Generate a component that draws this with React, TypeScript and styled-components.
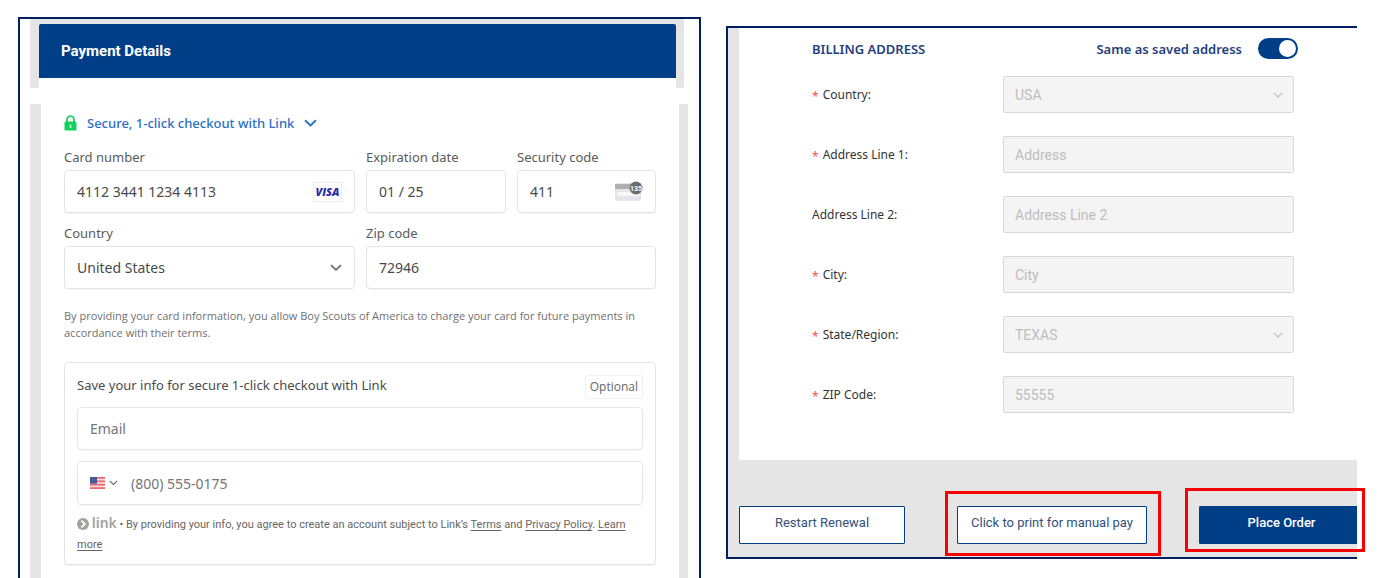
import React from "react";
import styled, { createGlobalStyle, css } from "styled-components";

const NAVY = "#001f60";
const BLUE = "#003f87";
const GRAY = "#e5e5e5";
const HUMANIST = `"Noto Sans", "Open Sans", sans-serif`;
const SMALL_PRINT = `"Open Sans", "Noto Sans", sans-serif`;
const ROBOTO = `Roboto, "Liberation Sans", sans-serif`;

const GlobalStyle = createGlobalStyle`
  *, *::before, *::after { box-sizing: border-box; }
  body { margin: 0; background: #fff; color: #4a4a4a; font-family: ${HUMANIST}; }
  input, select, button { font: inherit; color: inherit; margin: 0; }
`;

const Page = styled.main`
  display: grid;
  grid-template-columns: 683fr 631fr;
  column-gap: 25px;
  min-height: 100vh;
  padding: 17px 22px 0 18px;
`;

/* ---------- payment panel ---------- */

const PaymentPanel = styled.section`
  display: flex;
  flex-direction: column;
  border: 2px solid ${NAVY};
  border-bottom: 0;
  padding: 0 11px 0 10px;
`;

const HeaderFrame = styled.div`
  margin-right: 4px;
  padding: 5px 8px 0 9px;
  background: ${GRAY};
`;

const PanelHeader = styled.h2`
  margin: 0;
  padding: 0 22px;
  border-radius: 2px 2px 0 0;
  background: ${BLUE};
  color: #fff;
  font: 700 15px/54px ${ROBOTO};
`;

const HeaderTail = styled.div`
  height: 10px;
  background: #fff;
`;

const PaymentBody = styled.form`
  flex: 1;
  margin-top: 16px;
  padding: 8px 23px 12px;
  border-left: 11px solid ${GRAY};
  border-right: 9px solid ${GRAY};
`;

const LinkToggle = styled.button`
  display: flex;
  align-items: center;
  height: 22px;
  padding: 0;
  border: 0;
  background: none;
  color: #2b70c4;
  font-size: 13px;
  font-weight: 500;

  span { margin: 0 10px 0 10px; }
`;

const CardGrid = styled.div`
  display: grid;
  grid-template-columns: 291fr 140fr 139fr;
  column-gap: 11px;
  row-gap: 10px;
  margin-top: 13px;
`;

const Field = styled.div<{ $span?: number }>`
  grid-column: span ${(p) => p.$span ?? 1};
  min-width: 0;

  label {
    display: block;
    margin-bottom: 3px;
    font-size: 13px;
    line-height: 20px;
    color: #5a5a5a;
  }
`;

const boxed = css`
  border: 1px solid #e4e4e4;
  border-radius: 4px;
  background: #fff;
  box-shadow: 0 1px 1px rgba(0, 0, 0, 0.04);
`;

const Control = styled.div<{ $tall?: boolean }>`
  ${boxed}
  display: flex;
  align-items: center;
  height: ${(p) => (p.$tall ? 44 : 43)}px;
  padding: 0 12px;
  font-size: 14px;

  input {
    flex: 1;
    min-width: 0;
    padding: 0;
    border: 0;
    outline: 0;
    background: none;
    color: #4a4a4a;
  }
  input::placeholder { color: #757575; opacity: 1; }
  select {
    flex: 1;
    min-width: 0;
    padding: 0;
    border: 0;
    appearance: none;
    background: none;
  }
`;

const VisaMark = styled.span`
  display: grid;
  place-items: center;
  width: 29px;
  height: 20px;
  border: 1px solid #ececf2;
  color: #2b2fa8;
  font: italic 800 11px/18px "Open Sans", sans-serif;
`;

const Legal = styled.p`
  margin: 18px 0 0;
  font: 11px/17px ${SMALL_PRINT};
  color: #707070;
`;

const SaveBox = styled.section`
  ${boxed}
  margin-top: 21px;
  padding: 12px 12px 9px;
`;

const SaveHeading = styled.div`
  display: flex;
  justify-content: space-between;
  height: 32px;
  font-size: 13px;
  line-height: 20px;
`;

const Optional = styled.span`
  height: 24px;
  padding: 0 4px;
  border: 1px solid #f0f0f0;
  border-radius: 3px;
  font: 12px/22px ${SMALL_PRINT};
  color: #666;
`;

const SaveFields = styled.div`
  display: grid;
  row-gap: 11px;
`;

const CountryCode = styled.button`
  display: flex;
  align-items: center;
  gap: 4px;
  margin-right: 13px;
  padding: 0;
  border: 0;
  background: none;
`;

const Consent = styled.p`
  margin: 10px 0 0;
  font: 11px/20px ${ROBOTO};
  color: #666;

  a { color: inherit; text-underline-offset: 2px; }
  svg { vertical-align: -2px; }
`;

const LinkWord = styled.b`
  color: #a2a2a2;
  font: 600 14px/1 ${HUMANIST};
`;

/* ---------- billing panel ---------- */

const BillingPanel = styled.section`
  align-self: start;
  margin-top: 9px;
  padding-left: 11px;
  border: 2px solid ${NAVY};
  border-right: 0;
  background: ${GRAY};
`;

const BillingCard = styled.form`
  padding: 10px 59px 47px 73px;
  background: #fff;
`;

const BillingTop = styled.div`
  display: flex;
  align-items: center;
  height: 21px;
  color: #1f427c;
  font-size: 13px;
  font-weight: 600;
  line-height: 16px;

  h2 { flex: 1; margin: 0; font: inherit; }
  label { margin-right: 16px; }
`;

const Switch = styled.input`
  appearance: none;
  width: 40px;
  height: 21px;
  padding: 2px;
  border-radius: 11px;
  background: ${BLUE};

  &::before {
    content: "";
    display: block;
    width: 17px;
    height: 17px;
    border-radius: 50%;
    background: #fff;
  }
  &:checked::before { margin-left: auto; }
`;

const BillingRows = styled.div`
  display: grid;
  row-gap: 23px;
  margin: 17px 4px 0 0;
`;

const BillingRow = styled.div`
  display: grid;
  grid-template-columns: 191fr 291fr;
  align-items: center;

  label { color: #333; font-size: 12px; }
`;

const Required = styled.span`
  margin-right: 4px;
  color: #f5535a;
  line-height: 0;
  vertical-align: -2px;
`;

const Disabled = styled.div`
  display: flex;
  align-items: center;
  height: 37px;
  padding: 0 10px 0 11px;
  border: 1px solid #d9d9d9;
  border-radius: 2px;
  background: #f4f4f4;
  color: #bdbdbd;
  font: 400 14px ${ROBOTO};

  input, select {
    flex: 1;
    min-width: 0;
    padding: 0;
    border: 0;
    appearance: none;
    background: none;
    opacity: 1;
    color: inherit;
  }
  input::placeholder { color: inherit; opacity: 1; }
`;

const Actions = styled.div`
  display: flex;
  justify-content: space-between;
  padding: 46px 0 13px;
`;

const Slot = styled.div<{ $width: number; $mark?: string }>`
  position: relative;
  width: ${(p) => p.$width}px;

  ${(p) =>
    p.$mark &&
    css`
      &::after {
        content: "";
        position: absolute;
        inset: ${p.$mark};
        border: 3px solid #fb0000;
        pointer-events: none;
      }
    `}
`;

const Clip = styled.div`
  overflow: hidden;
`;

const ActionButton = styled.button<{ $primary?: boolean }>`
  display: block;
  width: ${(p) => (p.$primary ? "165px" : "100%")};
  height: 38px;
  padding: 0 0 5px;
  border: 1px solid ${BLUE};
  border-radius: 1px;
  background: ${(p) => (p.$primary ? BLUE : "#fff")};
  color: ${(p) => (p.$primary ? "#fff" : "#34507a")};
  font: ${(p) => (p.$primary ? 500 : 400)} 13px ${ROBOTO};
`;

/* ---------- icons ---------- */

const Chevron = ({ width, color, weight = 1.5 }: { width: number; color: string; weight?: number }) => (
  <svg width={width} height={width * 0.6} viewBox="0 0 12 7" fill="none" aria-hidden="true">
    <path d="M1 1l5 4.8L11 1" stroke={color} strokeWidth={weight} />
  </svg>
);

const Lock = () => (
  <svg width="13" height="16" viewBox="0 0 13 16" aria-hidden="true">
    <path d="M3 8V4.6a3.5 3.5 0 0 1 7 0V8" fill="none" stroke="#1fcf63" strokeWidth="1.8" />
    <rect x="0.5" y="6.6" width="12" height="9" rx="1.4" fill="#12d15c" />
    <path d="M6.5 9.5v3.4" stroke="#d4f8e1" strokeWidth="1.5" />
  </svg>
);

const CvcCard = () => (
  <svg width="28" height="22" viewBox="0 0 28 22" aria-hidden="true">
    <rect x="0" y="2" width="26" height="18" rx="2" fill="#e4e4e9" />
    <rect x="0" y="3" width="26" height="5" fill="#b0b0b4" />
    <rect x="2" y="11" width="22" height="4" fill="#f7f7f9" />
    <circle cx="21" cy="7" r="6.5" fill="#6c6c6c" />
    <text x="21" y="9.5" fill="#fff" fontFamily="Roboto, sans-serif" fontSize="7" fontWeight="700" textAnchor="middle">
      135
    </text>
  </svg>
);

const Flag = () => (
  <svg width="15" height="12" viewBox="0 0 15 12" aria-hidden="true">
    <rect width="15" height="12" rx="1" fill="#f7e4e6" />
    {[0, 3.4, 6.8, 10.2].map((y) => (
      <rect key={y} y={y} width="15" height="1.8" fill="#ee6a70" />
    ))}
    <rect width="7" height="6.8" rx="0.5" fill="#4b5899" />
  </svg>
);

const LinkLogo = () => (
  <svg width="12" height="12" viewBox="0 0 12 12" aria-hidden="true">
    <circle cx="6" cy="6" r="6" fill="#a2a2a2" />
    <path d="M4.4 2.6L7.8 6 4.4 9.4" fill="none" stroke="#fff" strokeWidth="1.9" />
  </svg>
);

/* ---------- page ---------- */

type BillingField = { id: string; label: string; required?: boolean; value?: string; hint?: string; choice?: boolean };

const billingFields: BillingField[] = [
  { id: "b-country", label: "Country", required: true, value: "USA", choice: true },
  { id: "b-line1", label: "Address Line 1", required: true, hint: "Address" },
  { id: "b-line2", label: "Address Line 2", hint: "Address Line 2" },
  { id: "b-city", label: "City", required: true, hint: "City" },
  { id: "b-state", label: "State/Region", required: true, value: "TEXAS", choice: true },
  { id: "b-zip", label: "ZIP Code", required: true, hint: "55555" },
];

export default function App() {
  return (
    <>
      <GlobalStyle />
      <Page>
        <PaymentPanel>
          <HeaderFrame>
            <PanelHeader>Payment Details</PanelHeader>
            <HeaderTail />
          </HeaderFrame>
          <PaymentBody>
            <LinkToggle type="button">
              <Lock />
              <span>Secure, 1-click checkout with Link</span>
              <Chevron width={13} color="#2b70c4" weight={1.8} />
            </LinkToggle>
            <CardGrid>
              <Field>
                <label htmlFor="card">Card number</label>
                <Control>
                  <input id="card" defaultValue="4112 3441 1234 4113" />
                  <VisaMark>VISA</VisaMark>
                </Control>
              </Field>
              <Field>
                <label htmlFor="exp">Expiration date</label>
                <Control>
                  <input id="exp" defaultValue="01 / 25" />
                </Control>
              </Field>
              <Field>
                <label htmlFor="cvc">Security code</label>
                <Control>
                  <input id="cvc" defaultValue="411" />
                  <CvcCard />
                </Control>
              </Field>
              <Field>
                <label htmlFor="country">Country</label>
                <Control>
                  <select id="country">
                    <option>United States</option>
                  </select>
                  <Chevron width={12} color="#666" />
                </Control>
              </Field>
              <Field $span={2}>
                <label htmlFor="zip">Zip code</label>
                <Control>
                  <input id="zip" defaultValue="72946" />
                </Control>
              </Field>
            </CardGrid>
            <Legal>
              By providing your card information, you allow Boy Scouts of America to charge your card for future
              payments in accordance with their terms.
            </Legal>
            <SaveBox>
              <SaveHeading>
                Save your info for secure 1-click checkout with Link
                <Optional>Optional</Optional>
              </SaveHeading>
              <SaveFields>
                <Control>
                  <input type="email" placeholder="Email" aria-label="Email" />
                </Control>
                <Control $tall>
                  <CountryCode type="button" aria-label="Country code">
                    <Flag />
                    <Chevron width={9} color="#666" />
                  </CountryCode>
                  <input type="tel" placeholder="(800) 555-0175" aria-label="Phone" />
                </Control>
              </SaveFields>
              <Consent>
                <LinkLogo /> <LinkWord>link</LinkWord> • By providing your info, you agree to create an account subject
                to Link’s <a href="#terms">Terms</a> and <a href="#privacy">Privacy Policy</a>.{" "}
                <a href="#more">Learn more</a>
              </Consent>
            </SaveBox>
          </PaymentBody>
        </PaymentPanel>

        <BillingPanel>
          <BillingCard>
            <BillingTop>
              <h2>BILLING ADDRESS</h2>
              <label htmlFor="same">Same as saved address</label>
              <Switch id="same" type="checkbox" role="switch" defaultChecked />
            </BillingTop>
            <BillingRows>
              {billingFields.map((f) => (
                <BillingRow key={f.id}>
                  <label htmlFor={f.id}>
                    {f.required && <Required>*</Required>}
                    {f.label}:
                  </label>
                  <Disabled>
                    {f.choice ? (
                      <>
                        <select id={f.id} disabled>
                          <option>{f.value}</option>
                        </select>
                        <Chevron width={10} color="#bdbdbd" />
                      </>
                    ) : (
                      <input id={f.id} placeholder={f.hint} disabled />
                    )}
                  </Disabled>
                </BillingRow>
              ))}
            </BillingRows>
          </BillingCard>
          <Actions>
            <Slot $width={166}>
              <ActionButton type="button">Restart Renewal</ActionButton>
            </Slot>
            <Slot $width={190} $mark="-15px -14px -12px -12px">
              <ActionButton type="button">Click to print for manual pay</ActionButton>
            </Slot>
            <Slot $width={158} $mark="-18px -8px -8px -14px">
              <Clip>
                <ActionButton type="button" $primary>
                  Place Order
                </ActionButton>
              </Clip>
            </Slot>
          </Actions>
        </BillingPanel>
      </Page>
    </>
  );
}
